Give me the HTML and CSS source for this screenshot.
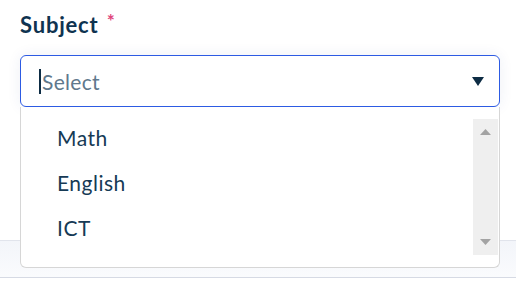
FILE: index.html
```html
<!DOCTYPE html>
<html lang="en">
<head>
<meta charset="utf-8">
<title>Subject select</title>
<link rel="stylesheet" href="styles.css">
</head>
<body>
<div class="page">
  <label class="label">Subject <span class="req">*</span></label>
  <div class="field">
    <div class="select">
      <span class="caret"></span><span class="placeholder">Select</span>
      <svg class="arrow" width="12" height="9" viewBox="0 0 12 9"><path d="M0 0H12L6 9Z" fill="#0d2c44"/></svg>
    </div>
    <div class="menu">
      <ul class="options">
        <li>Math</li>
        <li>English</li>
        <li>ICT</li>
      </ul>
      <div class="scrollbar">
        <svg width="11" height="6" viewBox="0 0 11 6"><path d="M0 6H11L5.5 0Z" fill="#a3a3a3"/></svg>
        <svg width="11" height="6" viewBox="0 0 11 6"><path d="M0 0H11L5.5 6Z" fill="#a3a3a3"/></svg>
      </div>
    </div>
  </div>
</div>
<div class="band"></div>
</body>
</html>
```

FILE: styles.css
```css
html, body {
  margin: 0;
  padding: 0;
  background: #ffffff;
}
body {
  font-family: "Lato", "Liberation Sans", sans-serif;
  overflow: hidden;
}
.page {
  padding: 12px 16px 0 20px;
}
.label {
  display: block;
  font-size: 22px;
  line-height: 25px;
  font-weight: 700;
  color: #0f3350;
  letter-spacing: 0.8px;
}
.req {
  color: #e0457b;
  font-size: 19px;
  font-weight: 700;
  vertical-align: top;
  line-height: 18px;
  margin-left: 2px;
}
.field {
  position: relative;
  margin-top: 18px;
}
.select {
  height: 50px;
  border: 1px solid #2d5be3;
  border-radius: 6px;
  display: flex;
  align-items: center;
  padding: 0 15px 0 18px;
  box-shadow: 0 0 14px rgba(40, 70, 140, 0.08);
  background: #fff;
}
.caret {
  width: 2px;
  height: 25px;
  background: #0d2c44;
  margin-right: 1px;
}
.placeholder {
  flex: 1;
  font-size: 21px;
  letter-spacing: 0.3px;
  color: #60788c;
}
.arrow {
  display: block;
}
.menu {
  position: absolute;
  top: 52px;
  left: 0;
  right: 0;
  height: 160px;
  border: 1px solid #d6d6d6;
  border-top: none;
  border-radius: 0 0 6px 6px;
  background: #fff;
  display: flex;
  z-index: 2;
}
.options {
  list-style: none;
  margin: 0;
  padding: 8px 0 0 36px;
  flex: 1;
}
.options li {
  height: 45px;
  line-height: 45px;
  font-size: 21px;
  letter-spacing: 0.5px;
  color: #163a55;
}
.scrollbar {
  width: 25px;
  margin: 12px 1px 12px 0;
  background: #efefef;
  display: flex;
  flex-direction: column;
  justify-content: space-between;
  align-items: center;
  padding: 10px 0 10px;
}
.scrollbar svg {
  display: block;
}
.band {
  margin-top: 133px;
  height: 36px;
  border-top: 1px solid #e1e4ec;
  border-bottom: 1px solid #d6dae4;
  background: linear-gradient(#f3f5fa, #fafbfd);
}
```
